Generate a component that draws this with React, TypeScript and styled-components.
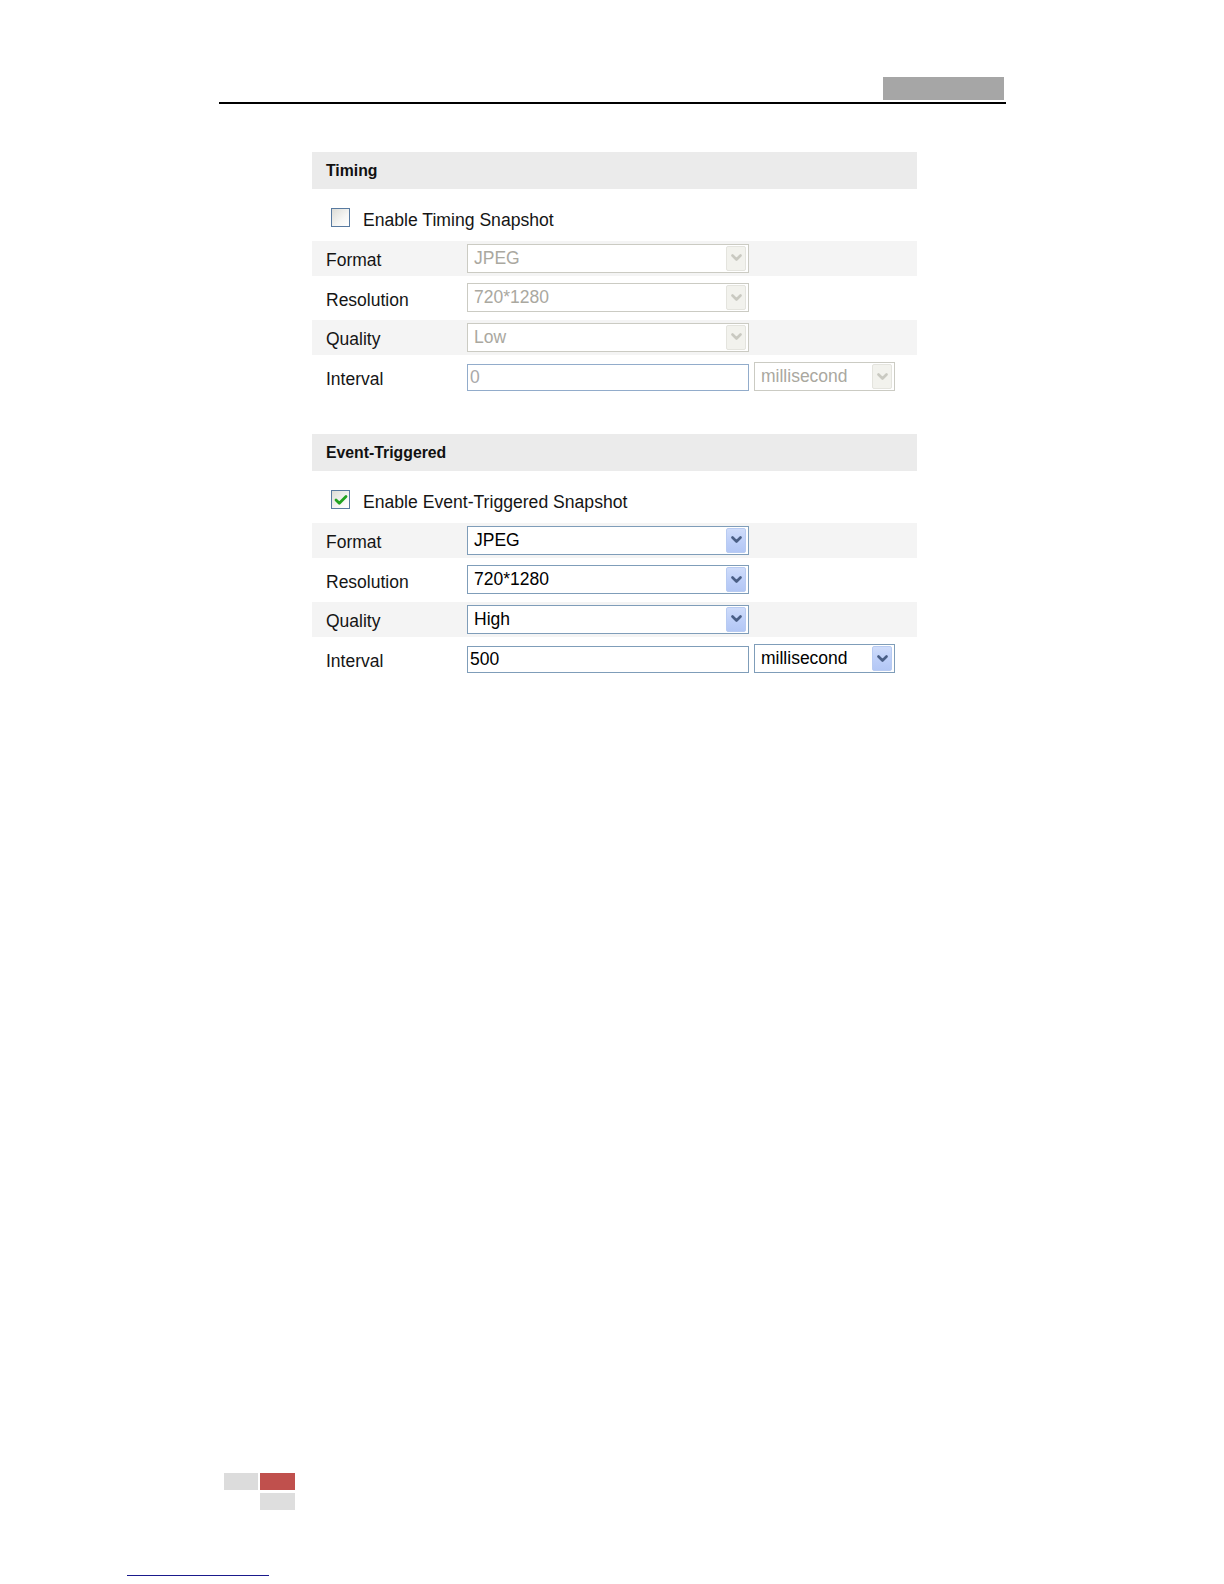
import styled, { createGlobalStyle } from 'styled-components';

const GlobalStyle = createGlobalStyle`
  html, body {
    margin: 0;
    padding: 0;
    background: #ffffff;
  }
  body {
    font-family: "Liberation Sans", Arial, sans-serif;
    color: #111111;
  }
`;

type FieldKind = 'select' | 'input';

type Field = {
  label: string;
  value: string;
  kind: FieldKind;
  unit?: string;
};

type Section = {
  title: string;
  checkLabel: string;
  enabled: boolean;
  fields: Field[];
};

const sections: Section[] = [
  {
    title: 'Timing',
    checkLabel: 'Enable Timing Snapshot',
    enabled: false,
    fields: [
      { label: 'Format', value: 'JPEG', kind: 'select' },
      { label: 'Resolution', value: '720*1280', kind: 'select' },
      { label: 'Quality', value: 'Low', kind: 'select' },
      { label: 'Interval', value: '0', kind: 'input', unit: 'millisecond' },
    ],
  },
  {
    title: 'Event-Triggered',
    checkLabel: 'Enable Event-Triggered Snapshot',
    enabled: true,
    fields: [
      { label: 'Format', value: 'JPEG', kind: 'select' },
      { label: 'Resolution', value: '720*1280', kind: 'select' },
      { label: 'Quality', value: 'High', kind: 'select' },
      { label: 'Interval', value: '500', kind: 'input', unit: 'millisecond' },
    ],
  },
];

const Chevron = ({ $enabled }: { $enabled: boolean }) => (
  <svg width="11" height="8" viewBox="0 0 11 8">
    <polyline
      points="1.5,1.5 5.5,5.5 9.5,1.5"
      fill="none"
      stroke={$enabled ? '#4a5f86' : '#c9c9c1'}
      strokeWidth="2.6"
      strokeLinecap="round"
      strokeLinejoin="round"
    />
  </svg>
);

const CheckMark = () => (
  <svg width="14" height="12" viewBox="0 0 14 12">
    <polyline
      points="2,6 5.3,9.3 12,2.5"
      fill="none"
      stroke="#22a322"
      strokeWidth="2.8"
      strokeLinecap="round"
      strokeLinejoin="round"
    />
  </svg>
);

const DropDown = ({
  value,
  enabled,
  $width,
}: {
  value: string;
  enabled: boolean;
  $width: number;
}) => (
  <StyledSelect $enabled={enabled} $width={$width}>
    <StyledSelectText $enabled={enabled}>{value}</StyledSelectText>
    <StyledArrowButton $enabled={enabled}>
      <Chevron $enabled={enabled} />
    </StyledArrowButton>
  </StyledSelect>
);

const SettingsSection = ({ section }: { section: Section }) => (
  <StyledSection>
    <StyledSectionHeader>{section.title}</StyledSectionHeader>
    <StyledCheckRow>
      <StyledCheckbox>{section.enabled && <CheckMark />}</StyledCheckbox>
      <StyledCheckLabel>{section.checkLabel}</StyledCheckLabel>
    </StyledCheckRow>
    <StyledFieldList>
      {section.fields.map((field, idx) => (
        <StyledFieldRow key={field.label} $shaded={idx % 2 === 0}>
          <StyledFieldLabel>{field.label}</StyledFieldLabel>
          {field.kind === 'select' ? (
            <DropDown value={field.value} enabled={section.enabled} $width={282} />
          ) : (
            <StyledInputGroup>
              <StyledTextInput $enabled={section.enabled}>{field.value}</StyledTextInput>
              <DropDown value={field.unit ?? ''} enabled={section.enabled} $width={141} />
            </StyledInputGroup>
          )}
        </StyledFieldRow>
      ))}
    </StyledFieldList>
  </StyledSection>
);

export default function App() {
  return (
    <>
      <GlobalStyle />
      <StyledPage>
        <StyledTopBar>
          <StyledTabBlock />
        </StyledTopBar>
        <StyledRule />
        <StyledPanel>
          {sections.map((section) => (
            <SettingsSection key={section.title} section={section} />
          ))}
        </StyledPanel>
        <StyledFooter>
          <StyledFooterTiles>
            <StyledTile $color="#dcdcdc" />
            <StyledTile $color="#c0504d" />
            <span />
            <StyledTile $color="#dedede" />
          </StyledFooterTiles>
          <StyledFooterLink />
        </StyledFooter>
      </StyledPage>
    </>
  );
}

// ANCHOR Page
const StyledPage = styled.div`
  width: 1224px;
  height: 1584px;
  display: flex;
  flex-direction: column;
  padding-top: 77px;
  box-sizing: border-box;
`;

const StyledTopBar = styled.div`
  margin-left: 219px;
  width: 787px;
  display: flex;
  justify-content: flex-end;
`;

const StyledTabBlock = styled.div`
  width: 121px;
  height: 23px;
  margin-right: 2px;
  background-color: #a6a6a6;
`;

const StyledRule = styled.div`
  margin-left: 219px;
  margin-top: 2px;
  width: 787px;
  height: 1.5px;
  background-color: #000000;
`;

// ANCHOR Panel
const StyledPanel = styled.div`
  margin-left: 312px;
  margin-top: 48px;
  width: 605px;
  display: flex;
  flex-direction: column;
  gap: 39.5px;
`;

const StyledSection = styled.section`
  display: flex;
  flex-direction: column;
`;

const StyledSectionHeader = styled.div`
  height: 37px;
  line-height: 37px;
  padding-left: 14px;
  background-color: #ebebeb;
  font-size: 15.8px;
  font-weight: bold;
  color: #111111;
`;

const StyledCheckRow = styled.div`
  height: 46px;
  padding-top: 6px;
  padding-left: 19px;
  display: flex;
  align-items: center;
  gap: 13px;
`;

const StyledCheckbox = styled.div`
  width: 17px;
  height: 17px;
  border: 1px solid #587aa0;
  background: linear-gradient(135deg, #dcdcd6 0%, #f6f6f4 60%, #ffffff 100%);
  display: flex;
  align-items: center;
  justify-content: center;
`;

const StyledCheckLabel = styled.span`
  font-size: 17.6px;
  color: #151515;
  padding-top: 5px;
`;

const StyledFieldList = styled.div`
  display: flex;
  flex-direction: column;
  gap: 4.5px;
`;

const StyledFieldRow = styled.div<{ $shaded: boolean }>`
  height: 35px;
  display: flex;
  align-items: center;
  background-color: ${(p) => (p.$shaded ? '#f4f4f4' : '#ffffff')};
`;

const StyledFieldLabel = styled.span`
  width: 141px;
  padding-left: 14px;
  font-size: 17.5px;
  color: #151515;
  padding-top: 5px;
`;

const StyledInputGroup = styled.div`
  display: flex;
  align-items: center;
  gap: 5px;
`;

const StyledTextInput = styled.div<{ $enabled: boolean }>`
  width: 282px;
  height: 27px;
  margin-top: 2px;
  box-sizing: border-box;
  border: 1px solid ${(p) => (p.$enabled ? '#7f9db9' : '#92accb')};
  padding-left: 2px;
  display: flex;
  align-items: center;
  font-size: 17.5px;
  color: ${(p) => (p.$enabled ? '#000000' : '#a9a9a9')};
  background-color: #ffffff;
`;

// ANCHOR Select
const StyledSelect = styled.div<{ $enabled: boolean; $width: number }>`
  width: ${(p) => p.$width}px;
  height: 29px;
  box-sizing: border-box;
  border: 1px solid ${(p) => (p.$enabled ? '#7f9db9' : '#cbcbc3')};
  background-color: #ffffff;
  display: flex;
  align-items: center;
  justify-content: space-between;
  padding: 0 2px 0 6px;
`;

const StyledSelectText = styled.span<{ $enabled: boolean }>`
  font-size: 17.5px;
  color: ${(p) => (p.$enabled ? '#000000' : '#aaa89f')};
`;

const StyledArrowButton = styled.div<{ $enabled: boolean }>`
  width: 20px;
  height: 25px;
  box-sizing: border-box;
  border-radius: 2px;
  display: flex;
  align-items: center;
  justify-content: center;
  border: 1px solid ${(p) => (p.$enabled ? '#b8cbf2' : '#e4e4de')};
  background: ${(p) =>
    p.$enabled
      ? 'linear-gradient(180deg, #cfdcfa 0%, #bccef8 60%, #b3c7f5 100%)'
      : '#f2f2ed'};
`;

// ANCHOR Footer
const StyledFooter = styled.div`
  margin-top: auto;
  padding-bottom: 8px;
  display: flex;
  flex-direction: column;
`;

const StyledFooterTiles = styled.div`
  margin-left: 224px;
  display: grid;
  grid-template-columns: 34px 35px;
  grid-template-rows: 17px 17px;
  column-gap: 2px;
  row-gap: 3px;
`;

const StyledTile = styled.div<{ $color: string }>`
  background-color: ${(p) => p.$color};
`;

const StyledFooterLink = styled.div`
  margin-left: 127px;
  margin-top: 65px;
  width: 142px;
  height: 1.5px;
  background-color: #1a1a8c;
`;
